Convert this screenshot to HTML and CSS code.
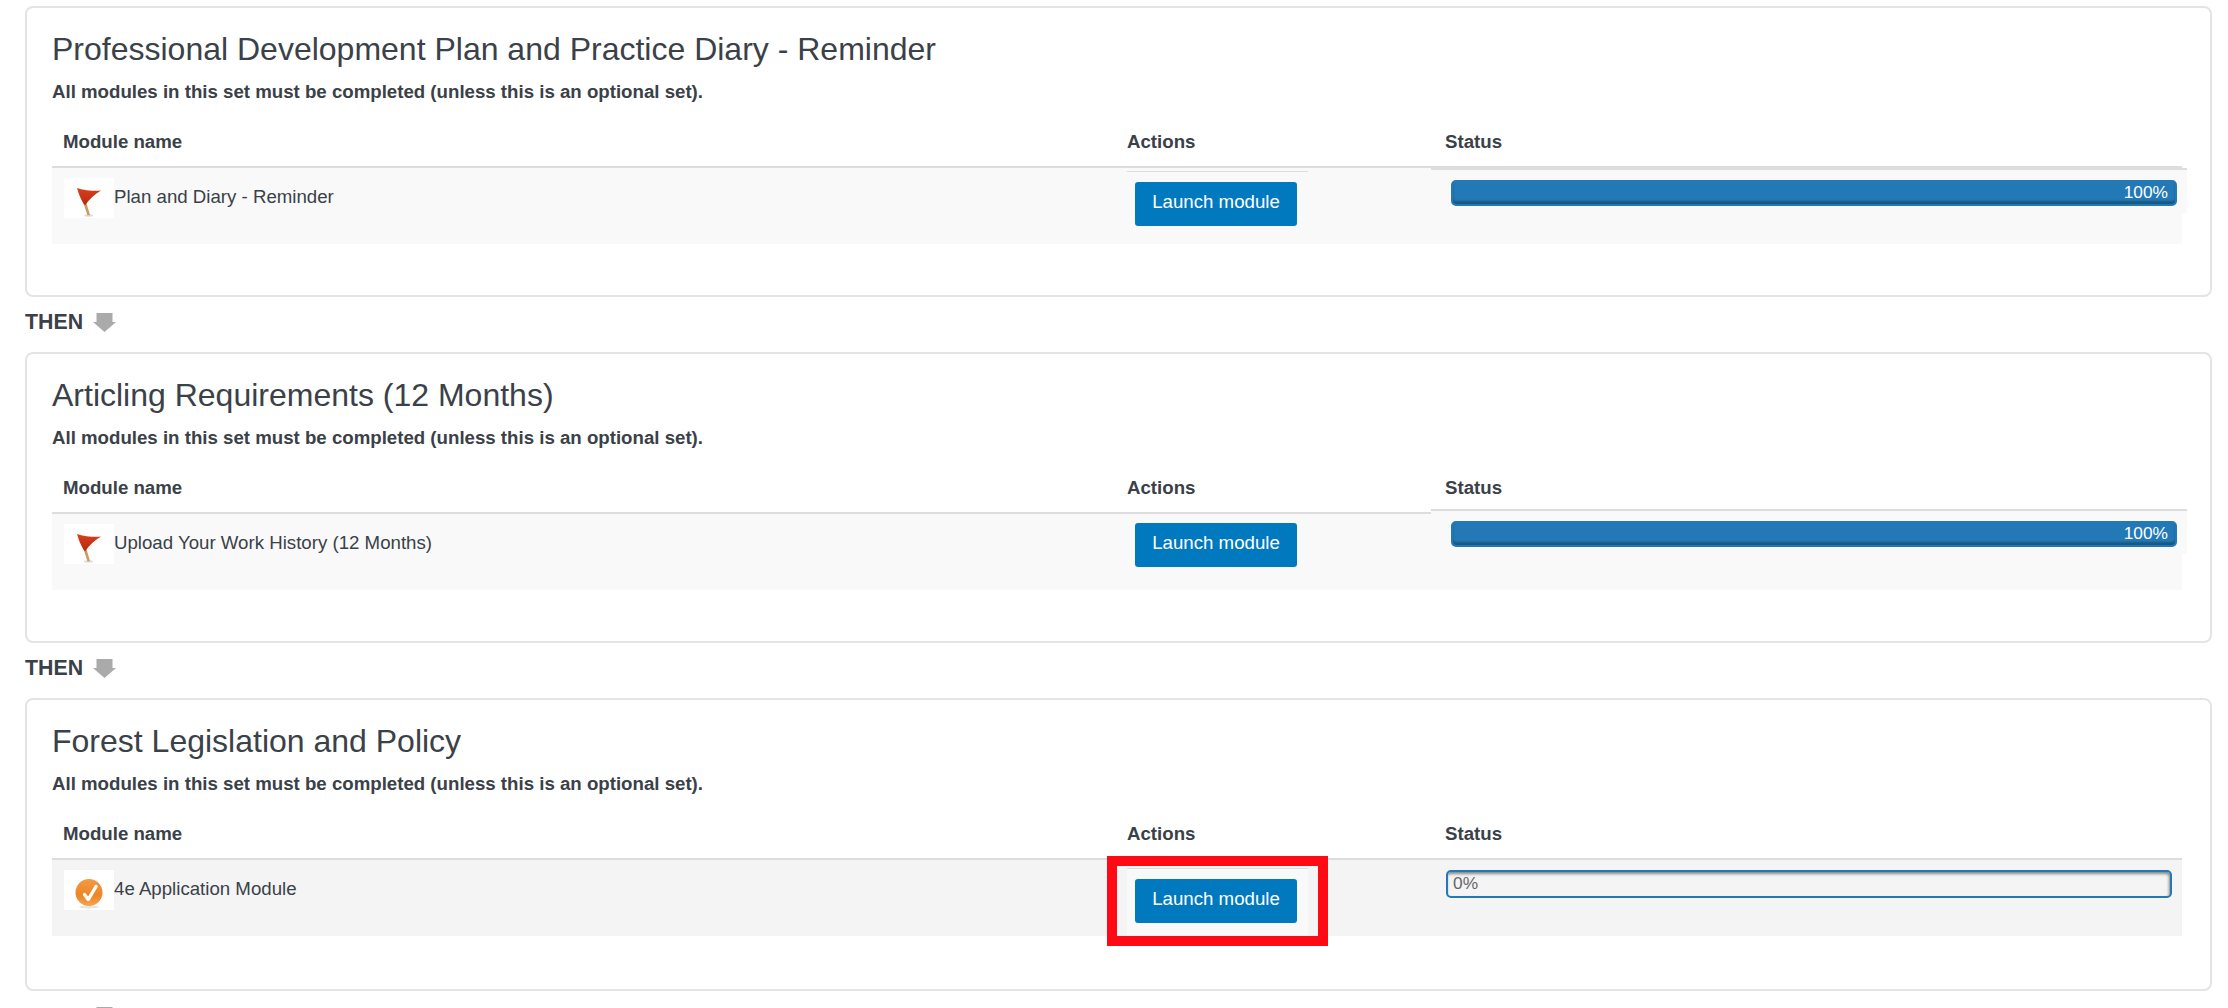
FILE: index.html
```html
<!DOCTYPE html>
<html lang="en">
<head>
<meta charset="utf-8">
<title>Module sets</title>
<link rel="stylesheet" href="styles.css">
</head>
<body>
<main class="page">
  <section class="card card-first">
    <h2 class="card-title">Professional Development Plan and Practice Diary - Reminder</h2>
    <p class="card-note">All modules in this set must be completed (unless this is an optional set).</p>
    <div class="table">
      <div class="thead"><div class="th th-name">Module name</div><div class="th">Actions</div><div class="th th-status">Status</div></div>
      <div class="row">
        <div class="cell-name">
          <span class="icon"><svg viewBox="0 0 50 40" width="50" height="40"><defs><linearGradient id="flag-a" x1="0" y1="0" x2="0" y2="1"><stop offset="0" stop-color="#d8401c"/><stop offset="1" stop-color="#b52a0e"/></linearGradient></defs><ellipse cx="24.500" cy="37.500" rx="4.500" ry="1.200" fill="#dedede"/><path d="M18.500 22 L23.500 37.500 L26 37 L21.500 22 Z" fill="#c89c62"/><path d="M13 10 C18 11.500 25 13.500 37 12.500 C31 16 25 21 21 27.500 C18 24 15 17 13 10 Z" fill="url(#flag-a)"/></svg></span>
          <span class="module-text">Plan and Diary - Reminder</span>
        </div>
        <div class="cell-actions"><button class="launch" type="button">Launch module</button></div>
        <div class="cell-status">
          <div class="bar bar-full">100%</div>
        </div>
      </div>
    </div>
  </section>
  <div class="then"><span>THEN</span><svg class="then-arrow" viewBox="0 0 23 19" width="23" height="19"><path d="M3.500 0 H19.500 V9 H23 L11.500 19 L0 9 H3.500 Z" fill="#aaaaaa"/></svg></div>
  <section class="card card-second">
    <h2 class="card-title">Articling Requirements (12 Months)</h2>
    <p class="card-note">All modules in this set must be completed (unless this is an optional set).</p>
    <div class="table">
      <div class="thead"><div class="th th-name">Module name</div><div class="th">Actions</div><div class="th th-status">Status</div></div>
      <div class="row">
        <div class="cell-name">
          <span class="icon"><svg viewBox="0 0 50 40" width="50" height="40"><defs><linearGradient id="flag-b" x1="0" y1="0" x2="0" y2="1"><stop offset="0" stop-color="#d8401c"/><stop offset="1" stop-color="#b52a0e"/></linearGradient></defs><ellipse cx="24.500" cy="37.500" rx="4.500" ry="1.200" fill="#dedede"/><path d="M18.500 22 L23.500 37.500 L26 37 L21.500 22 Z" fill="#c89c62"/><path d="M13 10 C18 11.500 25 13.500 37 12.500 C31 16 25 21 21 27.500 C18 24 15 17 13 10 Z" fill="url(#flag-b)"/></svg></span>
          <span class="module-text">Upload Your Work History (12 Months)</span>
        </div>
        <div class="cell-actions"><button class="launch" type="button">Launch module</button></div>
        <div class="cell-status">
          <div class="bar bar-full">100%</div>
        </div>
      </div>
    </div>
  </section>
  <div class="then"><span>THEN</span><svg class="then-arrow" viewBox="0 0 23 19" width="23" height="19"><path d="M3.500 0 H19.500 V9 H23 L11.500 19 L0 9 H3.500 Z" fill="#aaaaaa"/></svg></div>
  <section class="card card-third">
    <h2 class="card-title">Forest Legislation and Policy</h2>
    <p class="card-note">All modules in this set must be completed (unless this is an optional set).</p>
    <div class="table">
      <div class="thead"><div class="th th-name">Module name</div><div class="th">Actions</div><div class="th th-status">Status</div></div>
      <div class="row">
        <div class="cell-name">
          <span class="icon"><svg viewBox="0 0 50 40" width="50" height="40"><defs><linearGradient id="orange" x1="0" y1="0" x2="0" y2="1"><stop offset="0" stop-color="#f59a45"/><stop offset="0.600" stop-color="#ee8426"/><stop offset="1" stop-color="#f5a550"/></linearGradient></defs><ellipse cx="25" cy="37" rx="10" ry="1.500" fill="#e4e4e4"/><circle cx="25" cy="22.500" r="13.500" fill="url(#orange)"/><path d="M20.500 24.500 L24.300 29.500 L32 16.500" fill="none" stroke="#ffffff" stroke-width="3.400" stroke-linecap="round" stroke-linejoin="round"/></svg></span>
          <span class="module-text">4e Application Module</span>
        </div>
        <div class="cell-actions">
          <button class="launch" type="button">Launch module</button>
          <span class="highlight"></span>
        </div>
        <div class="cell-status">
          <div class="bar bar-empty">0%</div>
        </div>
      </div>
    </div>
  </section>
  <div class="then"><span>THEN</span><svg class="then-arrow" viewBox="0 0 23 19" width="23" height="19"><path d="M3.500 0 H19.500 V9 H23 L11.500 19 L0 9 H3.500 Z" fill="#aaaaaa"/></svg></div>
</main>
</body>
</html>
```
FILE: styles.css
```css
html, body {
  margin: 0;
  height: 1008px;
  overflow: hidden;
  background: #ffffff;
}

body {
  font-family: "Liberation Sans", Arial, sans-serif;
  font-size: 18.67px;
  color: #3a4148;
}

.page {
  padding: 6px 16px 0 25px;
}

.card {
  border: 2px solid #e4e4e4;
  border-radius: 8px;
  padding: 19px 28px 51px 25px;
}

.card-third {
  padding-bottom: 53px;
}

.card-title {
  margin: 0 0 9px;
  font-size: 32px;
  font-weight: 400;
  line-height: 44px;
}

.card-note {
  margin: 0 0 26px;
  font-weight: 700;
  line-height: 24px;
}

.thead,
.row {
  display: grid;
  grid-template-columns: 1075px 304px 1fr;
}

.thead {
  border-bottom: 2px solid #dddddd;
  padding-bottom: 13px;
  line-height: 23px;
}

.th {
  font-weight: 700;
}

.th-name {
  padding-left: 11px;
}

.th-status {
  padding-left: 14px;
}

.row {
  height: 76px;
  background: #f9f9f9;
}

.card-third .row {
  background: #f4f4f4;
}

.cell-name {
  display: flex;
  align-items: flex-start;
  padding: 10px 0 0 12px;
}

.icon {
  display: block;
  width: 50px;
  height: 40px;
  background: #ffffff;
}

.icon svg {
  display: block;
}

.module-text {
  line-height: 38px;
}

.cell-actions {
  position: relative;
  width: 181px;
  border-top: 1px solid #dddddd;
  padding-top: 10px;
  align-self: start;
}

.card-first .cell-actions {
  margin-top: 3px;
}

.card-second .cell-actions {
  margin-top: -2px;
}

.card-third .cell-actions {
  margin-top: 8px;
  height: 57px;
  background: #f9f9f9;
}

.launch {
  display: block;
  box-sizing: border-box;
  width: 162px;
  height: 44px;
  margin-left: 8px;
  padding: 0 0 4px;
  border: 0;
  border-radius: 3px;
  background: #0079be;
  color: #ffffff;
  font: 18.67px "Liberation Sans", Arial, sans-serif;
}

.highlight {
  position: absolute;
  top: -13px;
  left: -20px;
  width: 221px;
  height: 90px;
  box-sizing: border-box;
  border: 10px solid #ff0a14;
}

.cell-status {
  align-self: start;
  border-top: 2px solid #dddddd;
  margin-right: -5px;
  padding: 10px 10px 7px 20px;
  background: #f9f9f9;
}

.card-second .cell-status {
  margin-top: -5px;
}

.card-third .cell-status {
  border-top: 0;
  margin-right: 0;
  padding: 10px 10px 0 15px;
  background: none;
}

.bar {
  box-sizing: border-box;
  border: 2px solid #2279b5;
  border-radius: 5px;
  font-size: 17.33px;
}

.bar-full {
  height: 26px;
  padding-right: 7px;
  background: #2279b5;
  box-shadow: inset 0 -3px 2px rgba(0, 0, 0, 0.28);
  color: #ffffff;
  line-height: 20px;
  text-align: right;
}

.bar-empty {
  height: 28px;
  padding-left: 5px;
  background: #f4f4f4;
  box-shadow: inset -1px 2px 3px rgba(0, 0, 0, 0.45);
  color: #666666;
  line-height: 22px;
}

.then {
  display: flex;
  align-items: flex-start;
  gap: 10px;
  height: 55px;
  box-sizing: border-box;
  padding-top: 13px;
  font-size: 21.33px;
  font-weight: 700;
  line-height: 24px;
}

.then-arrow {
  display: block;
  margin-top: 3px;
}
```
